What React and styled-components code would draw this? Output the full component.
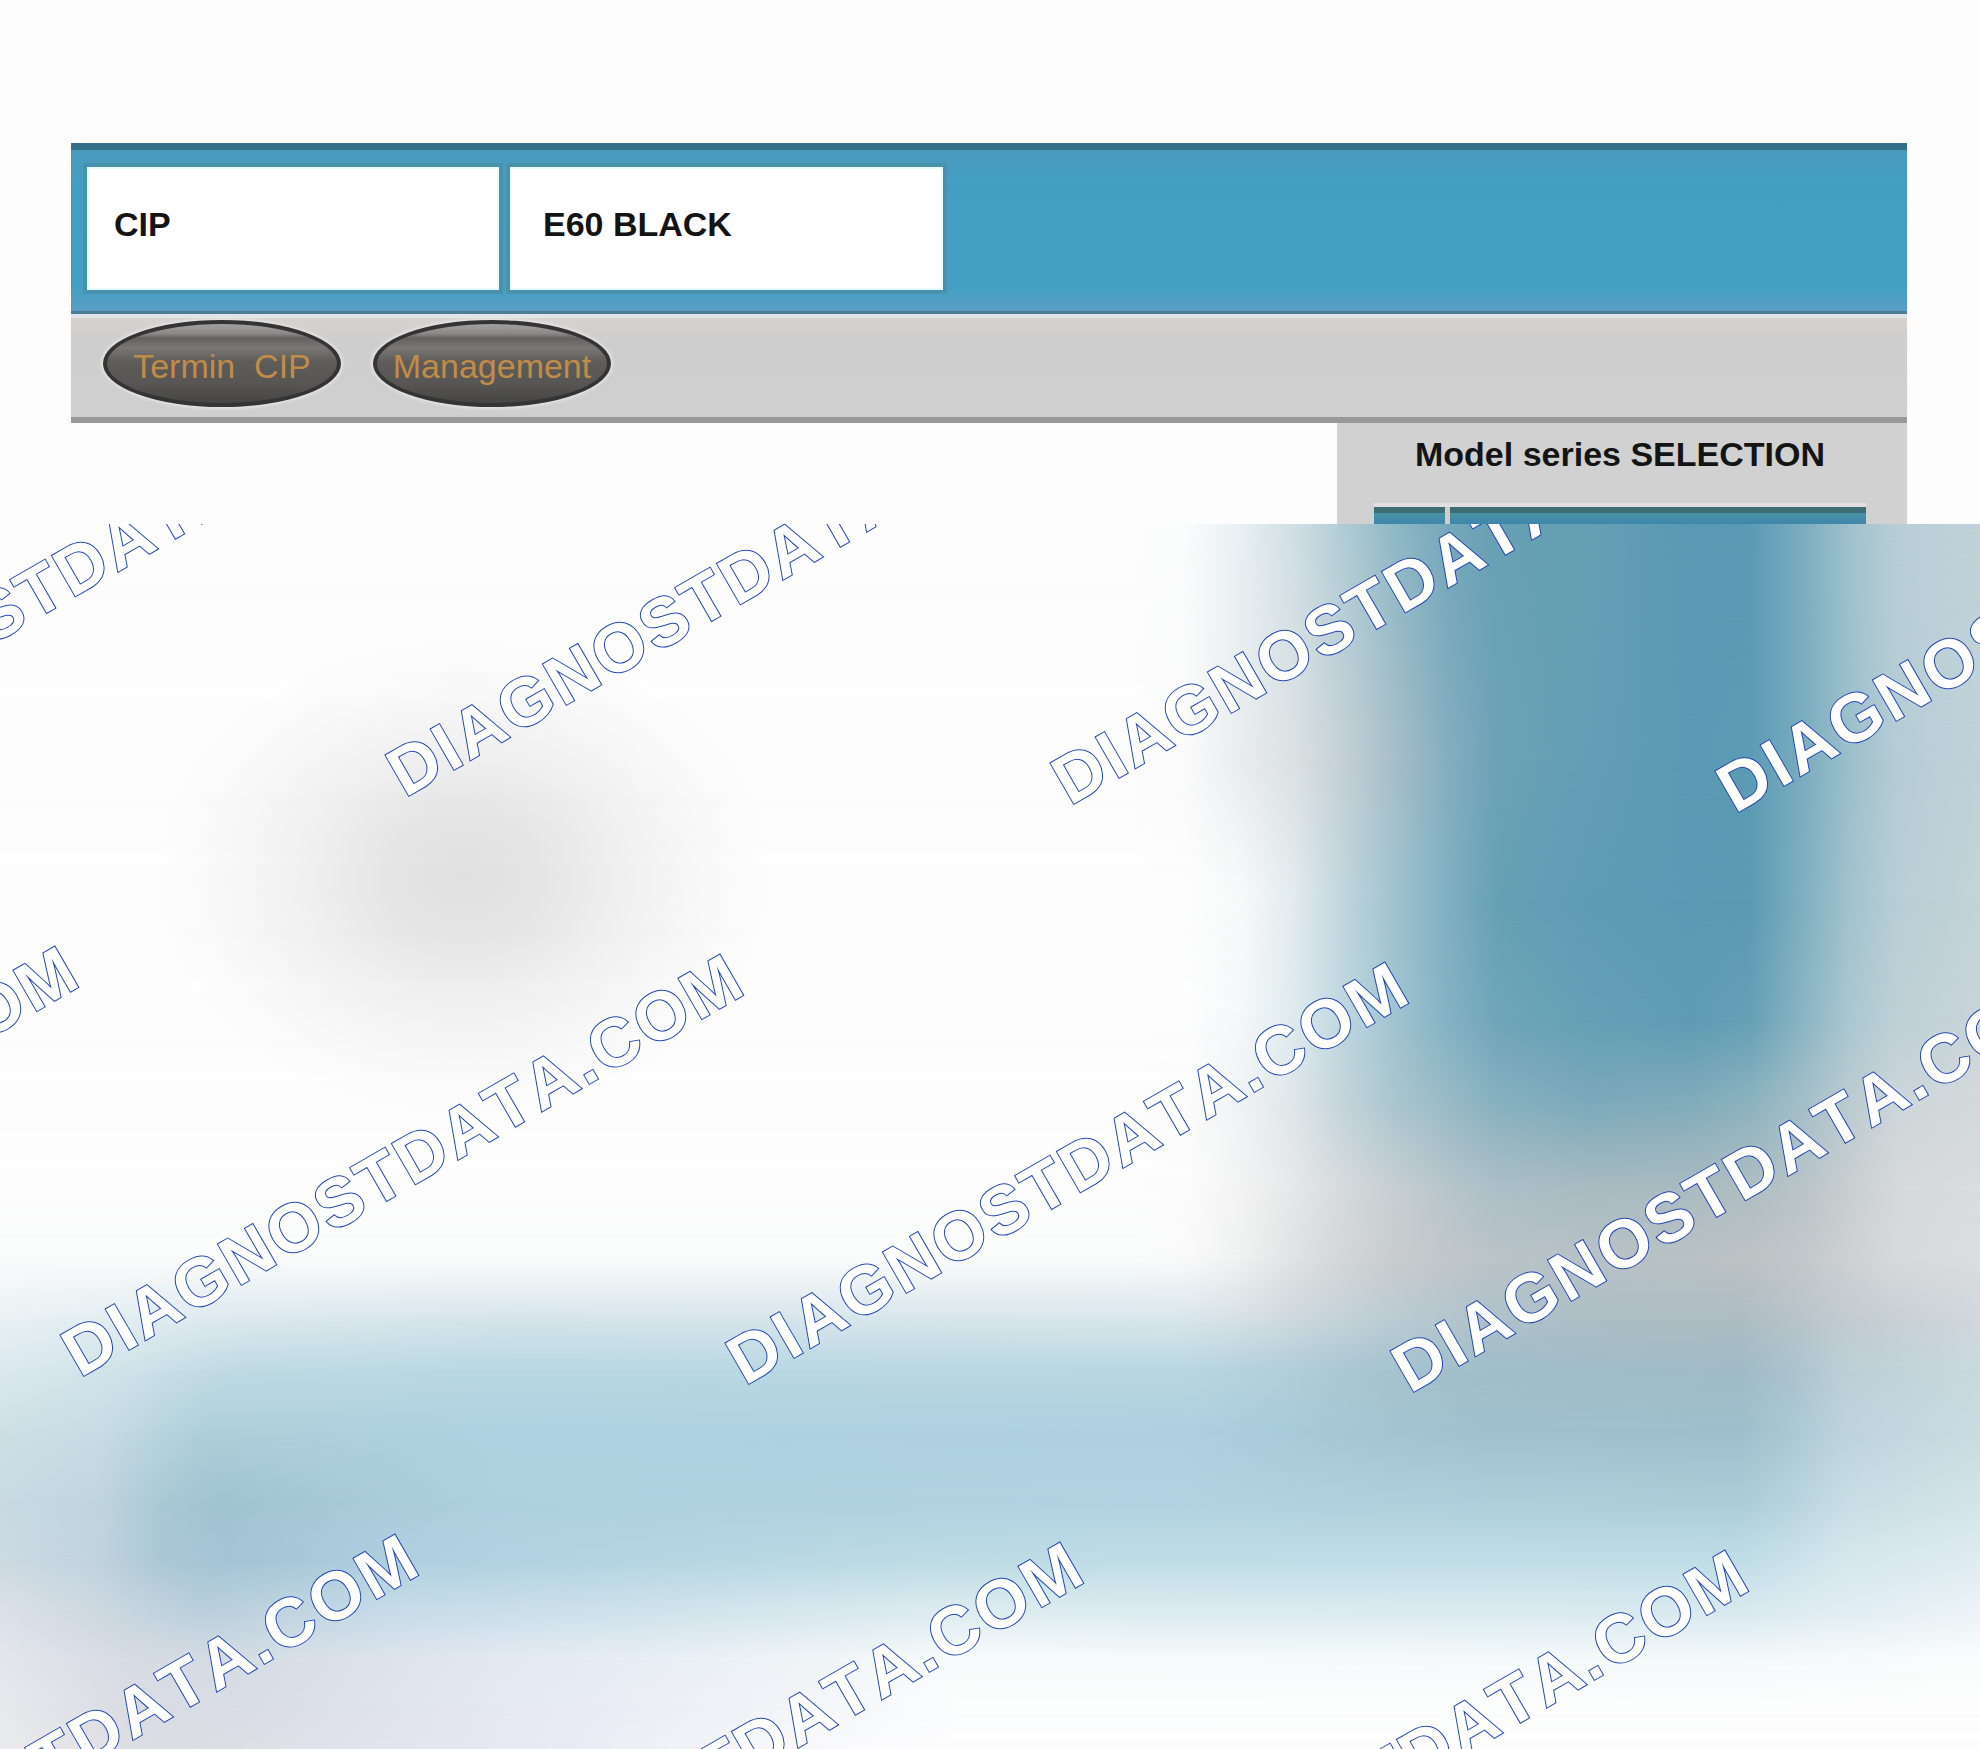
import React from 'react';
import styled, { createGlobalStyle } from 'styled-components';

const GlobalStyle = createGlobalStyle`
  * {
    box-sizing: border-box;
  }

  body {
    margin: 0;
    background: #fdfdfd;
    font-family: "Liberation Sans", Arial, sans-serif;
  }
`;

const Page = styled.div`
  display: flex;
  flex-direction: column;
  min-height: 100vh;
  overflow: hidden;
`;

const Preview = styled.main`
  height: 524px;
  padding: 143px 73px 0 71px;
  overflow: hidden;
`;

const Header = styled.header`
  display: flex;
  gap: 11px;
  height: 171px;
  padding: 17px 16px 21px;
  background: linear-gradient(180deg, #4b9abd, #429fc3 20%, #439fc4 85%, #5a9fc4);
  border-top: 7px solid #326f89;
  border-bottom: 3px solid #4c7f96;
`;

const Field = styled.div`
  display: flex;
  align-items: center;
  width: ${props => props.$width}px;
  padding: 0 0 8px ${props => props.$indent}px;
  background: #fff;
  border: 2px solid #e6fdff;
  box-shadow: 0 0 0 4px #4992ae;
  color: #141414;
  font-size: 34px;
  font-weight: bold;
`;

const Toolbar = styled.nav`
  display: flex;
  gap: 32px;
  height: 109px;
  padding: 2px 32px 0;
  background: linear-gradient(180deg, #d6d2d0, #cecece 25%, #cfcfcf);
  border-top: 4px solid #e2e6ea;
  border-bottom: 6px solid #999;
`;

const OvalButton = styled.button`
  width: 238px;
  height: 87px;
  padding: 5px 0 0;
  background: linear-gradient(180deg, #a2a2a0 0%, #8a8988 12%, #63625e 18%, #787773 30%, #5d5c59 48%, #575654 75%, #454543 100%);
  border: 4px solid #343437;
  border-radius: 50%;
  box-shadow: 0 0 3px 2px #e4e4e2;
  color: #c08c48;
  font-family: inherit;
  font-size: 34px;
  line-height: 40px;
  white-space: pre;
  cursor: pointer;
`;

const SelectionPanel = styled.section`
  width: 570px;
  height: 101px;
  margin-left: auto;
  padding: 0 41px 0 37px;
  background: #d1d1d1;
`;

const PanelTitle = styled.h2`
  margin: 0;
  padding-top: 11px;
  height: 84px;
  border-bottom: 4px solid #e3dfe0;
  color: #141414;
  font-size: 34px;
  line-height: 40px;
  text-align: center;
`;

const SeriesList = styled.div`
  display: grid;
  grid-template-columns: 71px 1fr;
  gap: 5px;
  height: 17px;
  background: #d4cccb;
`;

const SeriesCell = styled.div`
  background: linear-gradient(180deg, #4793a2, #3f86ac);
  border-top: 6px solid #3f6d74;
`;

const Lower = styled.div`
  position: relative;
  display: grid;
  flex: 1;
  min-height: 1225px;
  overflow: hidden;
`;

// Every band is a horizontal gradient that fades in between the band above and its own height
const Band = styled.div`
  grid-area: 1 / 1;
  background: linear-gradient(90deg, ${props => props.$stops});
  mask-image: linear-gradient(180deg, transparent ${props => props.$from}%, #000 ${props => props.$to}%);
`;

const Shade = styled.div`
  z-index: 1;
  grid-area: 1 / 1;
  background: radial-gradient(
    ellipse 310px 240px at 464px 352px,
    rgba(120, 120, 120, 0.22) 0%,
    rgba(120, 120, 120, 0.18) 25%,
    rgba(120, 120, 120, 0.09) 55%,
    rgba(120, 120, 120, 0.03) 80%,
    transparent 100%
  );
`;

const Watermark = styled.span`
  position: absolute;
  z-index: 2;
  left: ${props => props.$x}px;
  top: ${props => props.$y}px;
  color: #fff;
  font-size: 68px;
  font-weight: bold;
  font-kerning: none;
  line-height: 68px;
  letter-spacing: 3px;
  white-space: nowrap;
  transform: rotate(-30deg);
  transform-origin: 0 58px;
  -webkit-text-stroke: 2px #1f44b4;
  paint-order: stroke fill;
  pointer-events: none;
`;

const FIELD_WIDTH = 1980;
const FIELD_HEIGHT = 1225;

// x positions shared by the bands of the upper half
const COLUMNS = [1130, 1185, 1240, 1294, 1345, 1396, 1447, 1498, 1588, 1690, 1750, 1802, 1850, 1896, 1980];

const upper = (y, colors) => ({ y, stops: colors.split(' ').map((color, i) => [COLUMNS[i], color]) });

const bands = [
  upper(0, 'fdfdfd fbfcfc e8f0f3 d0dfe4 b0ccd5 8fb8c6 75a8ba 68a0b4 65a0b5 5a99b3 5b9ab4 7badc0 a0c2cd b8ced6 c0d3d9'),
  upper(236, 'fdfdfd fafafa e9ecee dbe1e3 c3d0d5 a6bec8 85aec0 6ca2b7 639eb5 5a9ab4 5c9bb4 79acbf 9cbfcb b5ccd4 c0d2d9'),
  upper(376, 'fdfdfd fdfdfd f8fafa e2ebee bfd5dd 9fc2cf 80b0c2 66a0b5 5e9cb5 5a9ab4 5b9ab3 7eafc0 a2c2cd b8ced5 c3d3d9'),
  upper(496, 'fdfdfd fdfdfd f5f8f9 deeaee bdd6de a0c3cf 84b2c3 6fa5b9 64a0b6 5e9cb4 65a0b6 8ab4c3 aac7d0 bed0d6 c8d5d9'),
  upper(576, 'fdfdfd fcfcfc f0f3f4 dee6e9 c2d4da a9c5ce 98bac6 86b0bf 7ba9ba 80abba 8bb2be a3bec8 bbcbd0 ccd6d9 d3d9db'),
  upper(666, 'fdfdfd fcfcfc f3f3f3 e6e7e8 d5dadc c6cfd2 b8c6cb acbfc7 a9bbc1 abbbc1 b0bec2 b9c4c7 c9cfd1 d6d9da dadcde'),
  upper(736, 'fafbfb f9f9fa f0f1f1 e0e1e2 d3d6d7 c8ccce c0c7ca bac4c7 b7c2c6 b9c2c4 bcc3c5 c2c8cb ced1d3 d7d9db dcdddf'),
  { y: 796, stops: [[0, 'e8f1f3'], [230, 'dce9ee'], [500, 'd5e4ea'], [1180, 'd8e6eb'], [1231, 'd6e1e5'], [1282, 'cfdadf'], [1384, 'bccdd4'], [1486, 'afc1ca'], [1588, 'acbec5'], [1741, 'adbcc2'], [1843, 'c1cbd0'], [1980, 'd0d8dc']] },
  { y: 846, stops: [[0, 'dbe9ee'], [130, 'cfe2e9'], [230, 'bfdae3'], [500, 'b8d8e2'], [1180, 'b9d7e1'], [1282, 'b2cfda'], [1384, 'a6c3cf'], [1486, 'a0bec9'], [1741, 'a0bbc6'], [1792, 'aac3cd'], [1843, 'bccfd6'], [1980, 'c9d9df']] },
  { y: 906, stops: [[0, 'cee0e6'], [100, 'c8dce4'], [200, 'aed0da'], [500, 'afd2e1'], [1180, 'aed0e0'], [1282, 'a9cbda'], [1384, 'a3c5d1'], [1486, '9fc0cd'], [1741, '9dbfcc'], [1792, 'aac8d3'], [1843, 'bdd3dc'], [1980, 'c9dce2']] },
  { y: 976, stops: [[0, 'c9dae2'], [100, 'c0d5de'], [160, 'a9c9d5'], [220, 'a0c3d1'], [350, 'a8cad8'], [500, 'aed1df'], [1180, 'b1d2e1'], [1384, 'aed0dc'], [1741, 'abcdd8'], [1792, 'b7d3dd'], [1843, 'c7dde4'], [1980, 'd3e4e9']] },
  { y: 1036, stops: [[0, 'ccdae2'], [100, 'c1d3dd'], [160, 'abc7d6'], [230, 'a3c4d5'], [400, 'afcfe0'], [600, 'b3d4e2'], [960, 'bddce4'], [1500, 'c0dde7'], [1741, 'bfdde6'], [1843, 'd5e7ed'], [1980, 'dfecf0']] },
  { y: 1086, stops: [[0, 'dbe1e9'], [100, 'ccd8e0'], [200, 'b9cfdb'], [400, 'c7dce8'], [600, 'cde1ea'], [960, 'ddecf0'], [1741, 'd8e9ef'], [1980, 'ebf3f6']] },
  { y: 1136, stops: [[0, 'e4e6ec'], [130, 'd7dbe3'], [230, 'd4dce4'], [500, 'e3e9f2'], [700, 'eaf0f5'], [960, 'f8fbfb'], [1740, 'f4f9fa'], [1980, 'fafcfc']] },
  { y: 1180, stops: [[0, 'e8e9ed'], [130, 'dadce3'], [230, 'd8dce4'], [500, 'e5e9f2'], [700, 'eef0f6'], [960, 'fcfdfd'], [1980, 'fdfdfd']] },
  { y: 1225, stops: [[0, 'ebebee'], [130, 'dddde3'], [200, 'dcdde4'], [400, 'e3e4ed'], [600, 'ebedf5'], [800, 'f9f9fb'], [960, 'fdfdfe'], [1980, 'fdfdfd']] },
];

const toStops = (stops) => stops.map(([x, color]) => `#${color} ${(x / FIELD_WIDTH) * 100}%`).join(', ');

// Watermark grid: each row is shifted to the left, each column drops a little
const watermarks = [0, 1, 2].flatMap(row =>
  [-1, 0, 1, 2].map(col => ({
    id: `${row}-${col}`,
    x: 405 - 325 * row + 665 * col,
    y: 216 + 580 * row + 8 * col,
  }))
);

const App = () => {
  return (
    <Page>
      <GlobalStyle />
      <Preview>
        <Header>
          <Field $width={412} $indent={25}>CIP</Field>
          <Field $width={433} $indent={31}>E60 BLACK</Field>
        </Header>
        <Toolbar>
          <OvalButton type="button">{'Termin  CIP'}</OvalButton>
          <OvalButton type="button">Management</OvalButton>
        </Toolbar>
        <SelectionPanel>
          <PanelTitle>Model series SELECTION</PanelTitle>
          <SeriesList>
            <SeriesCell />
            <SeriesCell />
          </SeriesList>
        </SelectionPanel>
      </Preview>
      <Lower>
        {bands.map((band, i) => (
          <Band
            key={band.y}
            $stops={toStops(band.stops)}
            $from={i === 0 ? -1 : (bands[i - 1].y / FIELD_HEIGHT) * 100}
            $to={(band.y / FIELD_HEIGHT) * 100}
          />
        ))}
        <Shade />
        {watermarks.map(mark => (
          <Watermark key={mark.id} $x={mark.x} $y={mark.y}>DIAGNOSTDATA.COM</Watermark>
        ))}
      </Lower>
    </Page>
  );
};

export default App;
